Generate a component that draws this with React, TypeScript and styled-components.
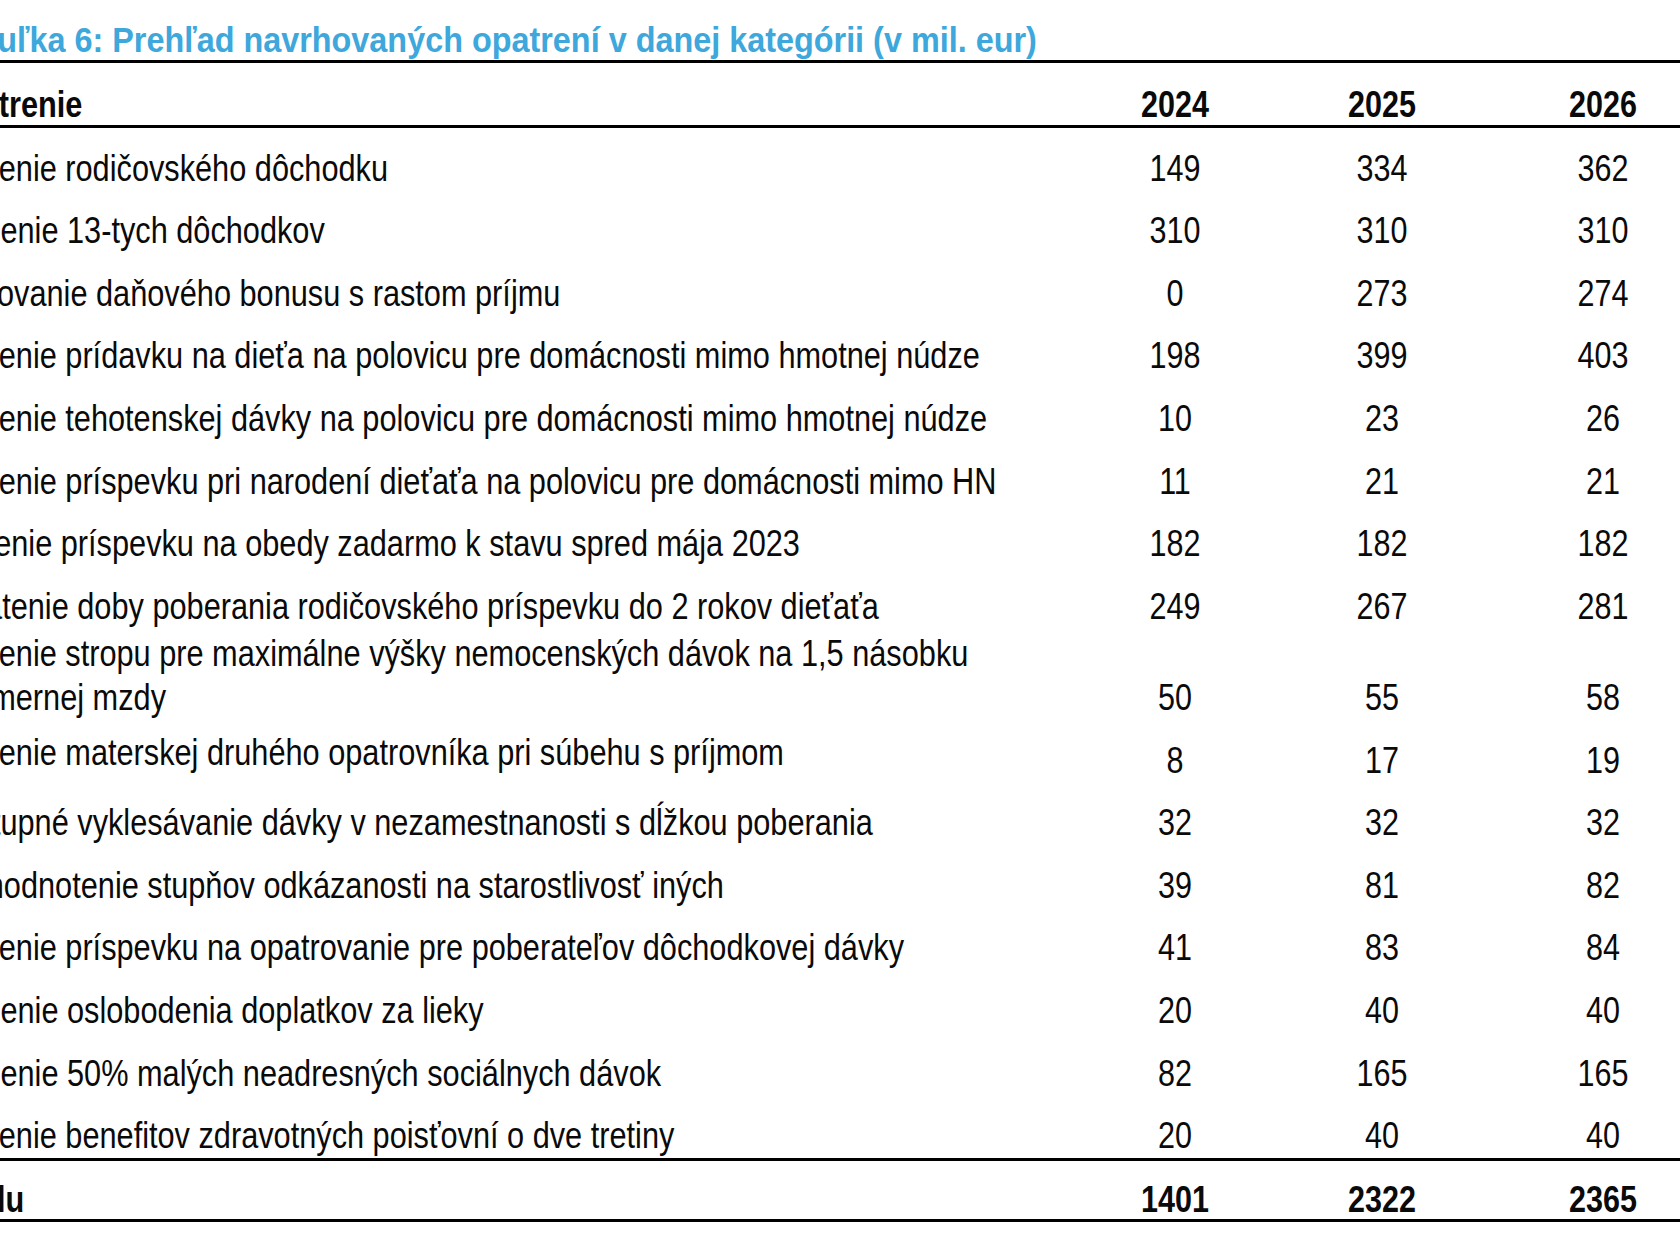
import React from "react";
import styled, { createGlobalStyle } from "styled-components";

const Global = createGlobalStyle`
  html, body {
    margin: 0;
    padding: 0;
    background: #ffffff;
    overflow: hidden;
  }
  body {
    font-family: "Liberation Sans", Arial, sans-serif;
    color: #0a0a0a;
  }
`;

const Page = styled.div`
  width: 1680px;
  height: 1260px;
  overflow: hidden;
  background: #ffffff;
`;

const Sheet = styled.div`
  margin-left: -61px;
  width: 1773px;
  display: flex;
  flex-direction: column;
`;

const Caption = styled.div`
  height: 60px;
  padding-left: 3px;
  display: flex;
  align-items: flex-end;
  font-size: 35px;
  line-height: 40px;
  font-weight: 700;
  color: #3ea7db;
  white-space: nowrap;
`;

const CaptionText = styled.span`
  display: inline-block;
  transform: scaleX(0.925);
  transform-origin: 0 50%;
`;

const Row = styled.div<{ $h: number; $lh: number; $bold?: boolean; $top?: boolean; $bottom?: boolean }>`
  display: grid;
  grid-template-columns: 1141px 190px 224px 218px;
  align-items: end;
  height: ${(p) => p.$h}px;
  font-size: 37px;
  line-height: ${(p) => p.$lh}px;
  font-weight: ${(p) => (p.$bold ? 700 : 400)};
  border-top: ${(p) => (p.$top ? "3px solid #000" : "none")};
  border-bottom: ${(p) => (p.$bottom ? "3px solid #000" : "none")};
`;

const Label = styled.div<{ $lift?: number }>`
  white-space: nowrap;
  padding-bottom: ${(p) => p.$lift ?? 0}px;
  transform: scaleX(0.83);
  transform-origin: 0 50%;
`;

const Num = styled.div`
  text-align: center;
  white-space: nowrap;
  transform: scaleX(0.825);
  transform-origin: 50% 50%;
`;

type Item = { label: React.ReactNode; v: [string, string, string]; h?: number; lift?: number };

const items: Item[] = [
  { label: "Zníženie rodičovského dôchodku", v: ["149", "334", "362"] },
  { label: "Zrušenie 13-tych dôchodkov", v: ["310", "310", "310"] },
  { label: "Znižovanie daňového bonusu s rastom príjmu", v: ["0", "273", "274"] },
  { label: "Zníženie prídavku na dieťa na polovicu pre domácnosti mimo hmotnej núdze", v: ["198", "399", "403"] },
  { label: "Zníženie tehotenskej dávky na polovicu pre domácnosti mimo hmotnej núdze", v: ["10", "23", "26"] },
  { label: "Zníženie príspevku pri narodení dieťaťa na polovicu pre domácnosti mimo HN", v: ["11", "21", "21"] },
  { label: "Vrátenie príspevku na obedy zadarmo k stavu spred mája 2023", v: ["182", "182", "182"] },
  { label: "Skrátenie doby poberania rodičovského príspevku do 2 rokov dieťaťa", v: ["249", "267", "281"] },
  {
    label: (
      <>
        Zníženie stropu pre maximálne výšky nemocenských dávok na 1,5 násobku
        <br />
        priemernej mzdy
      </>
    ),
    v: ["50", "55", "58"],
    h: 91.2,
  },
  { label: "Zníženie materskej druhého opatrovníka pri súbehu s príjmom", v: ["8", "17", "19"], lift: 8 },
  { label: "Postupné vyklesávanie dávky v nezamestnanosti s dĺžkou poberania", v: ["32", "32", "32"] },
  { label: "Prehodnotenie stupňov odkázanosti na starostlivosť iných", v: ["39", "81", "82"] },
  { label: "Zníženie príspevku na opatrovanie pre poberateľov dôchodkovej dávky", v: ["41", "83", "84"] },
  { label: "Zrušenie oslobodenia doplatkov za lieky", v: ["20", "40", "40"] },
  { label: "Zrušenie 50% malých neadresných sociálnych dávok", v: ["82", "165", "165"] },
  { label: "Zníženie benefitov zdravotných poisťovní o dve tretiny", v: ["20", "40", "40"] },
];

export default function App() {
  return (
    <Page>
      <Global />
      <Sheet>
        <Caption>
          <CaptionText>Tabuľka 6: Prehľad navrhovaných opatrení v danej kategórii (v mil. eur)</CaptionText>
        </Caption>
        <Row $h={62} $lh={40} $bold $top $bottom>
          <Label>Opatrenie</Label>
          <Num>2024</Num>
          <Num>2025</Num>
          <Num>2026</Num>
        </Row>
        {items.map((it, i) => (
          <Row key={i} $h={it.h ?? 62.6} $lh={44} $bottom={i === items.length - 1}>
            <Label $lift={it.lift}>{it.label}</Label>
            <Num>{it.v[0]}</Num>
            <Num>{it.v[1]}</Num>
            <Num>{it.v[2]}</Num>
          </Row>
        ))}
        <Row $h={58} $lh={38} $bold $bottom>
          <Label>Spolu</Label>
          <Num>1401</Num>
          <Num>2322</Num>
          <Num>2365</Num>
        </Row>
      </Sheet>
    </Page>
  );
}
